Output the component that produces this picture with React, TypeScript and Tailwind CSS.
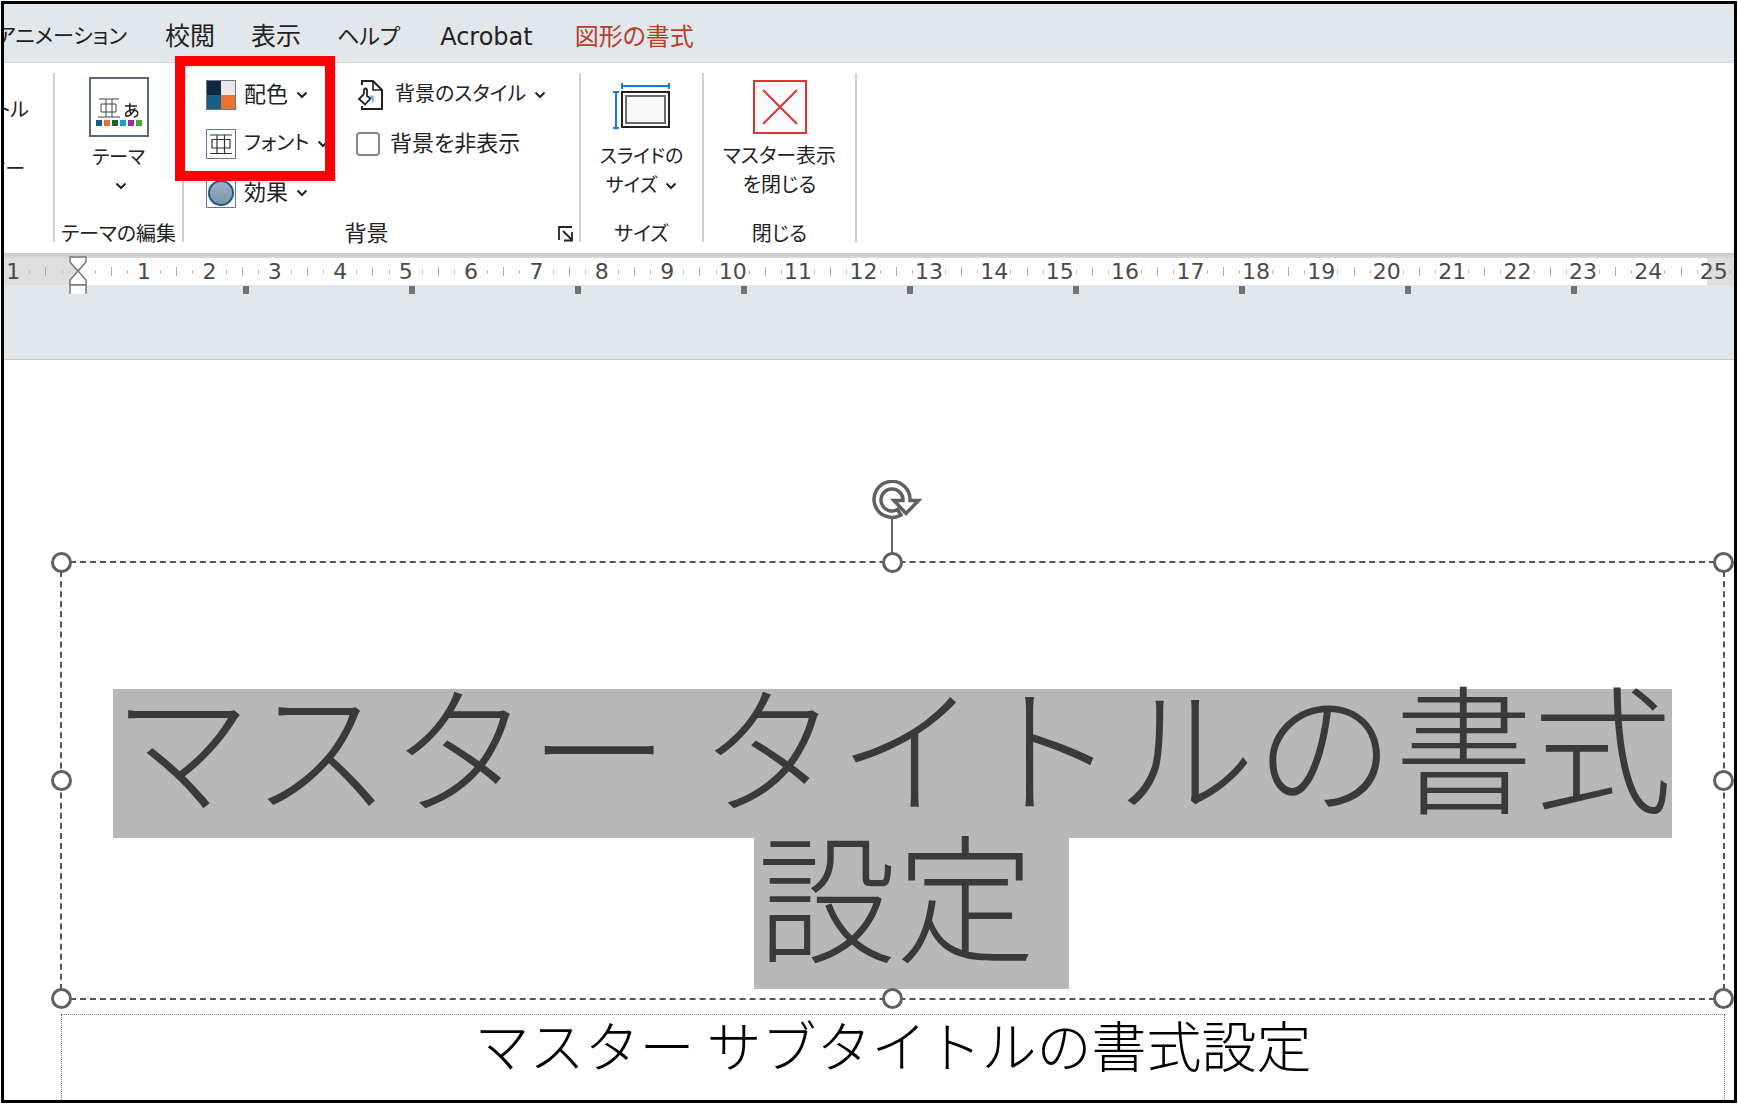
import React from "react";

const uiFont =
  "font-['DejaVu_Sans','Noto_Sans_CJK_JP',sans-serif] [font-feature-settings:'palt']";

function Chevron() {
  return (
    <svg width="12" height="8" viewBox="0 0 12 8" fill="none" aria-hidden="true" className="shrink-0">
      <path d="M1.5 1.5 6 6l4.5-4.5" stroke="#222" strokeWidth="2" />
    </svg>
  );
}

function ColorsIcon() {
  return (
    <svg width="30" height="30" viewBox="0 0 30 30" aria-hidden="true" className="shrink-0">
      <path d="M0 0h15v15H0z" fill="#0e2841" />
      <path d="M15 0h15v15H15z" fill="#e8e8e8" />
      <path d="M0 15h15v15H0z" fill="#156082" />
      <path d="M15 15h15v15H15z" fill="#e97132" />
      <path d="M.5.5h29v29H.5z" fill="none" stroke="#6f7785" />
    </svg>
  );
}

function FontsIcon() {
  return (
    <svg width="30" height="30" viewBox="0 0 30 30" fill="none" aria-hidden="true" className="shrink-0">
      <path d="M.5.5h29v29H.5z" fill="#fff" stroke="#68738c" />
      <path d="M4 6h22M4 24.500h22M11 6v18M18.500 6v18M6 10.500h18v8.500H6z" stroke="#333" strokeWidth="1.200" />
    </svg>
  );
}

function EffectsIcon() {
  return (
    <svg width="30" height="30" viewBox="0 0 30 30" aria-hidden="true" className="shrink-0">
      <defs>
        <linearGradient id="fx" x1="0" y1="0" x2="0" y2="1">
          <stop offset="0" stopColor="#a3b1c4" />
          <stop offset="1" stopColor="#7c91ab" />
        </linearGradient>
      </defs>
      <path d="M.5.5h29v29H.5z" fill="#fff" stroke="#68738c" />
      <circle cx="15" cy="15" r="12" fill="url(#fx)" stroke="#156082" strokeWidth="2" />
    </svg>
  );
}

function BackgroundStyleIcon() {
  return (
    <svg width="31" height="32" viewBox="-1 0 31 32" fill="none" aria-hidden="true" className="shrink-0">
      <path d="M5 6V2h11l9 9v19H5v-3" stroke="#222" strokeWidth="2" />
      <path d="M16 2v9h9" stroke="#222" strokeWidth="1.600" />
      <path d="M7 15v-4.500q1.500-2 3 0V17l3.500 2.500L8 25.500 2 20l5-5" stroke="#222" strokeWidth="1.800" />
      <path d="M12.500 16.500q4.500-1 4.500 3 0 3-2 5 .5-5-2.500-8z" fill="#6fb2ee" />
    </svg>
  );
}

function SlideSizeIcon() {
  return (
    <svg width="58" height="48" viewBox="0 0 58 48" fill="none" aria-hidden="true">
      <path d="M9 4h47M9 1v6M56 1v6M3 10v36M0 10h6M0 46h6" stroke="#1a80c8" strokeWidth="2" />
      <path d="M9 10h47v35H9z" fill="#fff" stroke="#222" strokeWidth="2" />
      <path d="M13 14h39v27H13z" fill="#f8f8f8" stroke="#6a6a6a" strokeWidth="2" />
    </svg>
  );
}

function CloseMasterIcon() {
  return (
    <svg width="54" height="54" viewBox="0 0 54 54" fill="none" aria-hidden="true">
      <path d="M1 1h52v52H1z" fill="#fafafa" stroke="#dc3535" strokeWidth="2" />
      <path d="M10 10l34 34M44 10L10 44" stroke="#dc3535" strokeWidth="2" />
    </svg>
  );
}

const themeSwatches = ["#156082", "#e97132", "#196b24", "#0f9ed5", "#a02b93", "#4ea72e"];

function ThemeIcon() {
  return (
    <span className="flex size-[60px] flex-col items-center justify-end border-2 border-[#5a6580] bg-white pb-[9px]">
      <svg width="44" height="22" viewBox="0 0 44 22" fill="none" aria-hidden="true">
        <path d="M2 2h20M1 20h22M9 2v18M15 2v18M4 7h15v8H4z" stroke="#444" />
        <path d="M28 9h12M33 6c-1 5 0 9 1 12M38 11c-2 6-6 9-9 8-2-3 3-7 8-6 5 1 5 6 0 7" stroke="#222" strokeWidth="1.500" />
      </svg>
      <span className="mt-px flex gap-[2px]">
        {themeSwatches.map((c) => (
          <span key={c} className="size-[6px]" style={{ backgroundColor: c }} />
        ))}
      </span>
    </span>
  );
}

function Group({ label, className, labelClass = "", children, launcher }: {
  label: string;
  className: string;
  labelClass?: string;
  children: React.ReactNode;
  launcher?: boolean;
}) {
  return (
    <section className={`relative flex h-[169px] shrink-0 flex-col border-r-2 border-[#d0d0d0] ${className}`}>
      <div className="flex-1">{children}</div>
      <div className={`flex h-5 items-center justify-center pt-[3px] leading-5 whitespace-nowrap ${labelClass}`}>
        {label}
      </div>
      {launcher && (
        <button aria-label="背景の書式設定" className="absolute right-[5px] bottom-0">
          <svg width="16" height="16" viewBox="0 0 16 16" fill="none" aria-hidden="true">
            <path d="M1 14V1h13M5 5l9 9M14 6v8.500H6" stroke="#222" strokeWidth="1.800" />
          </svg>
        </button>
      )}
    </section>
  );
}

function MenuButton({ icon, label, className = "" }: { icon: React.ReactNode; label: string; className?: string }) {
  return (
    <button className={`flex h-[49px] items-center gap-2 whitespace-nowrap ${className}`}>
      {icon}
      {label}
      <Chevron />
    </button>
  );
}

const tabs = [
  { name: "校閲", style: "text-[25px]" },
  { name: "表示", style: "text-[25px]" },
  { name: "ヘルプ", style: "text-[22px]" },
  { name: "Acrobat", style: "pr-1.5 pl-1 text-[24px]" },
  { name: "図形の書式", style: "text-[24px] text-[#b5412a]" },
];

function Tabs() {
  return (
    <nav className="flex h-[59px] items-center gap-9 overflow-hidden border-b border-[#d3d8dc] bg-[#e2e7eb] pt-[7px] whitespace-nowrap">
      <div className="flex w-[125px] justify-end pr-0.5 text-[21px]">
        <a href="#animation">アニメーション</a>
      </div>
      {tabs.map((t) => (
        <a key={t.name} href={`#${t.name}`} className={t.style}>{t.name}</a>
      ))}
    </nav>
  );
}

function Ribbon() {
  return (
    <div className="flex h-[190px] bg-white pt-[10px] text-[20px] leading-[29px]">
      <section className="flex h-[169px] w-[51px] shrink-0 flex-col items-start overflow-hidden border-r-2 border-[#d0d0d0] whitespace-nowrap">
        <div className="flex w-[25px] justify-end pt-[23px]">タイトル</div>
        <div className="flex w-[21px] justify-end pt-[30px]">フッター</div>
      </section>

      <Group label="テーマの編集" className="w-[129px]">
        <button className="flex w-full flex-col items-center pt-1">
          <ThemeIcon />
          <span className="mt-1.5 text-[19px]">テーマ</span>
          <span className="flex h-7 items-center pl-1"><Chevron /></span>
        </button>
      </Group>

      <Group label="背景" className="w-[397px]" labelClass="pr-[30px] text-[22px]" launcher>
        <div className="-mt-[3px] flex gap-[35px] pl-[22px]">
          <div className="flex w-[115px] flex-col items-start">
            <MenuButton icon={<ColorsIcon />} label="配色" className="text-[22px]" />
            <MenuButton icon={<FontsIcon />} label="フォント" />
            <MenuButton icon={<EffectsIcon />} label="効果" className="text-[22px]" />
          </div>
          <div className="flex flex-col items-start">
            <MenuButton icon={<BackgroundStyleIcon />} label="背景のスタイル" />
            <label className="flex h-[49px] items-center gap-2.5 text-[22px] whitespace-nowrap">
              <input type="checkbox" className="size-6 appearance-none rounded-sm border-2 border-[#858585] bg-white" />
              背景を非表示
            </label>
          </div>
        </div>
        <div className="pointer-events-none absolute -top-[17px] -left-[9px] h-[125px] w-[160px] border-10 border-[#ff0000]" />
      </Group>

      <Group label="サイズ" className="w-[123px]">
        <button className="flex w-full flex-col items-center pt-[9px] text-[19px] whitespace-nowrap">
          <SlideSizeIcon />
          <span className="mt-3">スライドの</span>
          <span className="flex items-center gap-2">サイズ<Chevron /></span>
        </button>
      </Group>

      <Group label="閉じる" className="w-[153px]">
        <button className="flex w-full flex-col items-center pt-[7px] whitespace-nowrap">
          <CloseMasterIcon />
          <span className="mt-2">マスター表示</span>
          <span>を閉じる</span>
        </button>
      </Group>
    </div>
  );
}

function IndentMarker() {
  return (
    <svg width="18" height="38" viewBox="0 0 18 38" fill="none" aria-hidden="true">
      <path d="M1 1h16v5L9 15 1 6zM1 29v-5l8-9 8 9v5z" fill="#fff" stroke="#777" strokeWidth="1.500" />
      <path d="M1 38v-9h16v9" fill="#fff" stroke="#777" strokeWidth="1.500" />
    </svg>
  );
}

const rulerCells = Array.from({ length: 27 }, (_, i) => i - 1);

function cellBackground(n: number) {
  if (n === -1) return "bg-[#dedede]";
  if (n === 0) return "bg-[linear-gradient(to_right,#dedede_50%,#fff_50%)]";
  if (n === 25) return "bg-[linear-gradient(to_right,#fff_40%,#dedede_40%)]";
  return "bg-white";
}

function Ruler() {
  return (
    <div className="relative h-[42px] overflow-hidden bg-[#e2e7eb]">
      <div className="h-[5px] bg-linear-to-b from-[#c6cacd] to-[#d8dadb]" />
      <div className="-mr-[12px] -ml-[24px] flex h-[27px] text-[22px] text-[#4a4a4a]">
        {rulerCells.map((n) => (
          <div key={n} className={`flex min-w-0 flex-1 items-center ${cellBackground(n)}`}>
            <div className="h-[9px] w-1/4 border-l border-[#aaa]" />
            <div className="h-1 w-0 border-l border-[#bbb]" />
            <div className="flex w-1/2 items-center justify-center leading-[27px]">
              {n === 0 ? null : Math.abs(n)}
            </div>
            <div className="h-1 w-1/4 border-l border-[#bbb]" />
          </div>
        ))}
      </div>
      <div className="mr-[157px] ml-[239px] flex justify-between pt-px">
        {Array.from({ length: 9 }, (_, i) => (
          <span key={i} className="h-2 w-[6px] bg-[#707376]" />
        ))}
      </div>
      <div className="absolute top-[3px] left-[65px]">
        <IndentMarker />
      </div>
    </div>
  );
}

const handles = [
  "-top-[11px] -left-[11px]",
  "-top-[11px] left-1/2 -ml-[11px]",
  "-top-[11px] -right-[11px]",
  "top-1/2 -mt-[11px] -left-[11px]",
  "top-1/2 -mt-[11px] -right-[11px]",
  "-bottom-[11px] -left-[11px]",
  "-bottom-[11px] left-1/2 -ml-[11px]",
  "-bottom-[11px] -right-[11px]",
];

function RotateHandle() {
  return (
    <div className="absolute -top-[83px] left-1/2 -ml-[21px]">
      <svg width="50" height="76" viewBox="0 0 50 76" fill="none" aria-hidden="true">
        <path d="M20 38v38" stroke="#606060" strokeWidth="2" />
        <path
          d="M38 20.500A18 18 0 1 0 29 35L25.500 29.500A11 11 0 1 1 31 20.500H22L34 33.500 46.500 20.500Z"
          fill="#fff"
          stroke="#606060"
          strokeWidth="3.500"
        />
      </svg>
    </div>
  );
}

function Slide() {
  return (
    <main className="flex flex-1 flex-col overflow-hidden border-t border-[#c5c9cc] bg-white pt-[201px] pr-[9px] pl-[56px] font-['Noto_Sans_CJK_JP',sans-serif] [font-feature-settings:normal]">
      <div className="relative h-[439px] border-2 border-dashed border-[#555]">
        <h1 className="mt-[126px] text-center text-[139px] leading-[108px] font-light whitespace-nowrap text-[#3a3a3a]">
          <span className="mx-auto block h-[149px] w-fit bg-[#b8b8b8]">マスター タイトルの書式</span>
          <span className="block pl-[38px]">
            <span className="mx-auto block h-[151px] w-fit bg-[#b8b8b8] px-[3px]">設定{"\u00a0"}</span>
          </span>
        </h1>
        <RotateHandle />
        {handles.map((h) => (
          <span key={h} className={`absolute size-[21px] rounded-full border-[3px] border-[#606060] bg-white ${h}`} />
        ))}
      </div>
      <div className="mt-[14px] ml-px flex-1 border border-b-0 border-dotted border-[#777]">
        <h2 className="text-center text-[55px] leading-[57px] font-light whitespace-nowrap text-black">
          マスター サブタイトルの書式設定
        </h2>
      </div>
    </main>
  );
}

export default function App() {
  return (
    <div className={`flex min-h-screen flex-col bg-white p-px ${uiFont} text-[#222]`}>
      <div className="flex flex-1 flex-col overflow-hidden border-3 border-black">
        <Tabs />
        <Ribbon />
        <Ruler />
        <div className="h-[64px] bg-[#e2e7eb]" />
        <Slide />
      </div>
    </div>
  );
}
